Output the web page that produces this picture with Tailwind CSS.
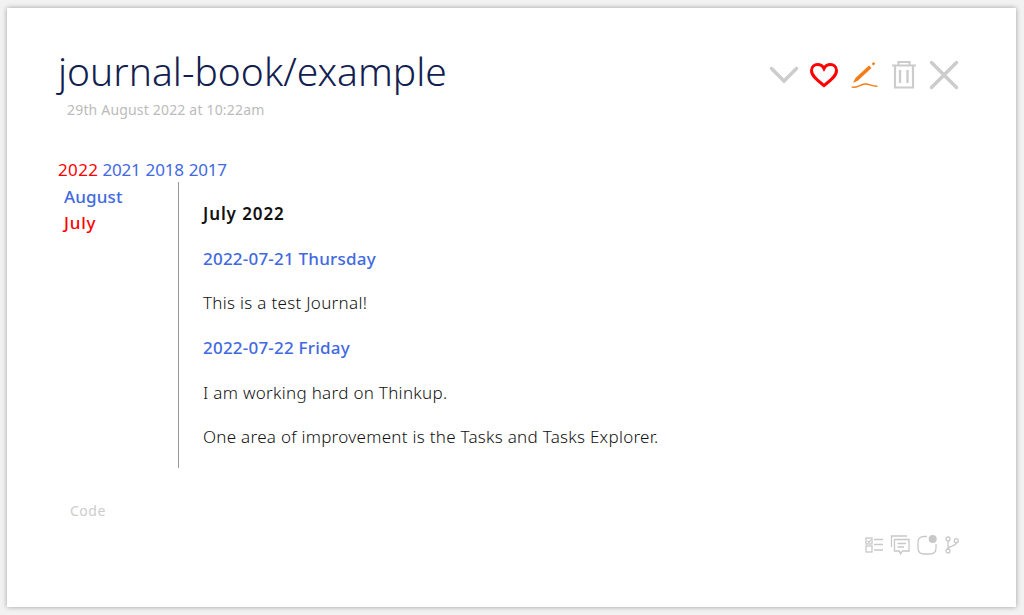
<!DOCTYPE html>
<html><head><meta charset="utf-8">
<script src="https://cdn.jsdelivr.net/npm/@tailwindcss/browser@4"></script>
</head>
<body class="w-[1024px] h-[615px] overflow-hidden bg-[#f2f2f2] font-['Noto_Sans',sans-serif]">
<div class="mt-[8px] ml-[7px] w-[1009px] h-[599px] bg-white shadow-[0_0_5px_rgba(0,0,0,0.35)] pl-[51px] pr-[57px] pt-[38px] flex flex-col">
  <div class="flex justify-between items-start h-[92px]">
    <div>
      <h1 class="text-[39px] leading-[50px] font-light text-[#11204f]">journal-book/example</h1>
      <div class="ml-[9px] mt-[4px] text-[14px] leading-[20px] text-[#bbbbbb] tracking-[0.18px]">29th August 2022 at 10:22am</div>
    </div>
    <div class="flex items-center gap-[10px] mt-[14px]">
      <svg width="30" height="30" viewBox="0 0 30 30" fill="none" stroke="#cccccc" stroke-width="3.4" stroke-linecap="round"><path d="M2.5 8.5 L15 21 L27.5 8.5"/></svg>
      <svg width="30" height="30" viewBox="0 0 30 30" fill="none" stroke="#ff0000" stroke-width="3"><path d="M15 25.5 C10 21.5 2.5 16.5 2.5 10.5 C2.5 6.5 5.5 4.5 8.5 4.5 C11.5 4.5 13.8 6 15 8.5 C16.2 6 18.5 4.5 21.5 4.5 C24.5 4.5 27.5 6.5 27.5 10.5 C27.5 16.5 20 21.5 15 25.5 Z"/></svg>
      <svg width="30" height="30" viewBox="0 0 30 30" fill="none" stroke-linecap="round"><path d="M4 23 L6.5 18 L20 5.5 L22.5 8 L9 20.5 Z" fill="#f57c14"/><path d="M23.5 3 L25.5 4.5" stroke="#f57c14" stroke-width="2.6" stroke-linecap="butt"/><path d="M3 27 C7 28.5 11 24.5 16 24 C20 23.7 24 26.8 28 26.2" stroke="#f57c14" stroke-width="1.3"/></svg>
      <svg width="30" height="30" viewBox="0 0 30 30" fill="none" stroke="#cccccc" stroke-width="2.2"><path d="M3 5.5 H27 M9.5 5 V2 H20.5 V5 M6 6 V27.5 H24 V6"/><path d="M11 10 V23 M18.5 10 V23" stroke-width="2.4"/></svg>
      <svg width="30" height="30" viewBox="0 0 30 30" fill="none" stroke="#cccccc" stroke-width="3.4" stroke-linecap="round"><path d="M2.5 2.5 L27.5 27.5 M27.5 2.5 L2.5 27.5"/></svg>
    </div>
  </div>
  <div class="mt-[20px] text-[17px] leading-[24px] flex gap-[5px]">
    <span class="text-[#ff0000] tracking-[0.4px] mr-[-1px]">2022</span><span class="text-[#4169e1] tracking-[-0.2px]">2021</span><span class="text-[#4169e1] tracking-[-0.2px]">2018</span><span class="text-[#4169e1] tracking-[-0.2px]">2017</span>
  </div>
  <div class="flex">
    <div class="w-[120px] pl-[6px] pt-[2px] text-[17px] leading-[26px] font-medium">
      <div class="text-[#4169e1] tracking-[0.13px]">August</div>
      <div class="text-[#ff0000] tracking-[0.8px]">July</div>
    </div>
    <div class="w-[1px] h-[286px] bg-[#999999]"></div>
    <div class="pl-[24px] pt-[20px] text-[17px] leading-[24px] text-[#111111] flex flex-col gap-[20.7px]">
      <div class="font-semibold tracking-[0.9px]">July 2022</div>
      <div class="text-[#4169e1] font-medium tracking-[0.22px]">2022-07-21 Thursday</div>
      <div class="font-light tracking-[0.3px]">This is a test Journal!</div>
      <div class="text-[#4169e1] font-medium tracking-[0.22px]">2022-07-22 Friday</div>
      <div class="font-light tracking-[0.3px]">I am working hard on Thinkup.</div>
      <div class="font-light tracking-[0.28px]">One area of improvement is the Tasks and Tasks Explorer.</div>
    </div>
  </div>
  <div class="mt-[33px] ml-[12px] text-[14px] leading-[20px] text-[#cccccc] tracking-[0.5px]">Code</div>
  <div class="flex justify-end items-center gap-[7px] mt-[14px] mr-[-1px]">
    <svg width="18" height="20" viewBox="0 0 18 20" fill="none" stroke="#c8c8c8" stroke-width="1.3"><rect x="1" y="3" width="6" height="6"/><path d="M2.5 6 L4 7.5 L6 4.5" stroke-width="1.2"/><rect x="1" y="11" width="6" height="6"/><path d="M9 4.5 H18 M9 9.5 H18 M9 15 H18"/></svg>
    <svg width="20" height="20" viewBox="0 0 20 20" fill="none" stroke="#c8c8c8" stroke-width="1.3"><path d="M1.5 12 V1 H17"/><path d="M4.5 4.5 H19 V16 H12.5 L10.5 19 L9.5 16 H4.5 Z"/><path d="M7.5 8.5 H16 M7.5 12 H14"/></svg>
    <svg width="20" height="20" viewBox="0 0 20 20" fill="none" stroke="#c8c8c8" stroke-width="1.3"><path d="M10 1.5 H7 C3 1.5 1 3.5 1 7 V13 C1 17 3 19 7 19 H13 C17 19 19 17 19 13 V9"/><circle cx="15.7" cy="4" r="4" fill="#c8c8c8" stroke="none"/></svg>
    <svg width="16" height="20" viewBox="0 0 16 20" fill="none" stroke="#c8c8c8" stroke-width="1.3"><circle cx="4" cy="4" r="2"/><circle cx="4" cy="16" r="2"/><circle cx="12.3" cy="5.7" r="2"/><path d="M4 6 V14 M12.3 7.7 C12.3 11.5 5 10 4 14"/></svg>
  </div>
</div>
</body></html>
